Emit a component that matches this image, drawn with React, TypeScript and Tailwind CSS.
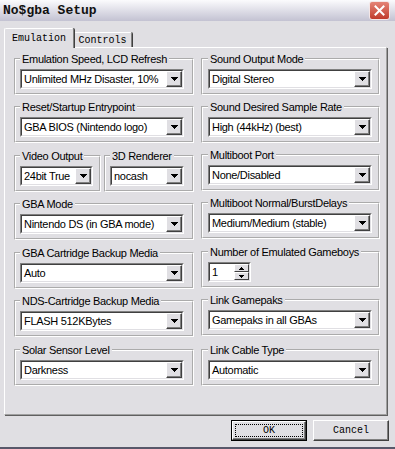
import React from "react";

const sans = "font-['Liberation_Sans',Arial,sans-serif] text-[11px] tracking-[-0.3px] text-black";
const mono = "font-['Liberation_Mono','Courier_New',monospace] tracking-normal";

function Arrow() {
  return (
    <svg width="7" height="4" viewBox="0 0 7 4" shapeRendering="crispEdges">
      <path d="M0 0h7v1h-1v1h-1v1h-1v1h-1v-1h-1v-1h-1v-1h-1z" fill="#000" />
    </svg>
  );
}

function DropBtn() {
  return (
    <div className="w-[16px] h-[16px] flex-none border border-t-white border-l-white border-r-[#404040] border-b-[#404040] bg-[#e0dfe3] shadow-[inset_-1px_-1px_0_#808080] flex items-center justify-center">
      <Arrow />
    </div>
  );
}

function Combo({ value, className = "" }: { value: string; className?: string }) {
  return (
    <div className={`h-[20px] flex border border-t-[#808080] border-l-[#808080] border-r-white border-b-white ${className}`}>
      <div className="flex-1 flex min-w-0 border border-t-[#404040] border-l-[#404040] border-r-[#e0dfe3] border-b-[#e0dfe3] bg-white">
        <span className="flex-1 min-w-0 pl-[2px] leading-[16px] whitespace-nowrap overflow-hidden">{value}</span>
        <DropBtn />
      </div>
    </div>
  );
}

function Spin() {
  return (
    <div className="w-[43px] h-[20px] flex border border-t-[#808080] border-l-[#808080] border-r-white border-b-white">
      <div className="flex-1 flex border border-t-[#404040] border-l-[#404040] border-r-[#e0dfe3] border-b-[#e0dfe3] bg-white">
        <span className="flex-1 pl-[2px] leading-[16px]">1</span>
        <div className="w-[15px] flex flex-col">
          <div className="h-[8px] border border-t-white border-l-white border-r-[#404040] border-b-[#404040] bg-[#e0dfe3] flex items-center justify-center">
            <svg width="5" height="3" viewBox="0 0 5 3" shapeRendering="crispEdges"><path d="M2 0h1v1h1v1h1v1h-5v-1h1v-1h1z" fill="#000" /></svg>
          </div>
          <div className="h-[8px] border border-t-white border-l-white border-r-[#404040] border-b-[#404040] bg-[#e0dfe3] flex items-center justify-center">
            <svg width="5" height="3" viewBox="0 0 5 3" shapeRendering="crispEdges"><path d="M0 0h5v1h-1v1h-1v1h-1v-1h-1v-1h-1z" fill="#000" /></svg>
          </div>
        </div>
      </div>
    </div>
  );
}

function Group({ label, children, className = "" }: { label: string; children: React.ReactNode; className?: string }) {
  return (
    <fieldset className={`h-[43px] border-2 [border-style:groove] border-white pt-[3px] pb-[4px] min-w-0 ${className}`}>
      <legend className="px-[2px] leading-[14px] whitespace-nowrap">{label}</legend>
      {children}
    </fieldset>
  );
}

export default function App() {
  return (
    <div className={`w-[395px] h-[449px] bg-[#e0dfe3] flex flex-col border-b-2 border-[#58586a] ${sans}`}>
      {/* title bar */}
      <div className="h-[21px] flex-none flex items-center justify-between bg-gradient-to-b from-[#fbfbfd] to-[#c3c2d2] pl-[3px] pr-[5px]">
        <span className={`${mono} text-[13px] font-bold text-[#111] leading-none`}>No$gba Setup</span>
        <div className="w-[21px] h-[19px] rounded-[3px] border border-[#f4e6e6] bg-gradient-to-b from-[#e48376] to-[#c03a2c] flex items-center justify-center">
          <svg width="11" height="11" viewBox="0 0 11 11">
            <path d="M1.5 1.5L9.5 9.5M9.5 1.5L1.5 9.5" stroke="#fff" strokeWidth="2" strokeLinecap="square" />
          </svg>
        </div>
      </div>

      {/* tabs */}
      <div className="flex items-end h-[26px] pl-[4px] flex-none">
        <div className={`relative z-10 -mb-px w-[70px] h-[20px] border-t border-l border-white border-r border-r-[#808080] rounded-t-[2px] bg-[#e0dfe3] shadow-[1px_0_0_#404040] flex items-start justify-center pt-[4px] ${mono} text-[10px] leading-[12px]`}>
          Emulation
        </div>
        <div className={`w-[58px] h-[15px] border-t border-white border-r border-r-[#808080] rounded-t-[2px] shadow-[1px_0_0_#404040] flex items-start justify-center pt-[2px] ${mono} text-[10px] leading-[12px]`}>
          Controls
        </div>
      </div>

      {/* panel */}
      <div className="ml-[4px] w-[383px] h-[368px] flex-none border-t border-l border-white border-r border-b border-r-[#a0a0a0] border-b-[#a0a0a0] shadow-[1px_1px_0_#606060] pl-[9px] pt-[4px] flex gap-[7px]">
        <div className="w-[180px] flex flex-col">
          <Group label="Emulation Speed, LCD Refresh" className="pl-[4px]">
            <Combo value="Unlimited MHz Disaster, 10%" className="w-[164px]" />
          </Group>
          <Group label="Reset/Startup Entrypoint" className="pl-[4px] mt-[5px]">
            <Combo value="GBA BIOS (Nintendo logo)" className="w-[164px]" />
          </Group>
          <div className="flex gap-[3px] mt-[6px]">
            <Group label="Video Output" className="pl-[4px] w-[87px]">
              <Combo value="24bit True" className="w-[73px]" />
            </Group>
            <Group label="3D Renderer" className="pl-[4px] w-[90px]">
              <Combo value="nocash" className="w-[74px]" />
            </Group>
          </div>
          <Group label="GBA Mode" className="pl-[4px] mt-[5px]">
            <Combo value="Nintendo DS (in GBA mode)" className="w-[164px]" />
          </Group>
          <Group label="GBA Cartridge Backup Media" className="pl-[4px] mt-[6px]">
            <Combo value="Auto" className="w-[164px]" />
          </Group>
          <Group label="NDS-Cartridge Backup Media" className="pl-[4px] mt-[5px]">
            <Combo value="FLASH 512KBytes" className="w-[164px]" />
          </Group>
          <Group label="Solar Sensor Level" className="pl-[4px] mt-[6px]">
            <Combo value="Darkness" className="w-[164px]" />
          </Group>
        </div>
        <div className="w-[179px] flex flex-col">
          <Group label="Sound Output Mode" className="pl-[5px]">
            <Combo value="Digital Stereo" className="w-[164px]" />
          </Group>
          <Group label="Sound Desired Sample Rate" className="pl-[5px] mt-[5px]">
            <Combo value="High (44kHz) (best)" className="w-[164px]" />
          </Group>
          <Group label="Multiboot Port" className="pl-[5px] mt-[5px]">
            <Combo value="None/Disabled" className="w-[164px]" />
          </Group>
          <Group label="Multiboot Normal/BurstDelays" className="pl-[5px] mt-[5px]">
            <Combo value="Medium/Medium (stable)" className="w-[164px]" />
          </Group>
          <Group label="Number of Emulated Gameboys" className="pl-[5px] mt-[6px]">
            <Spin />
          </Group>
          <Group label="Link Gamepaks" className="pl-[5px] mt-[5px]">
            <Combo value="Gamepaks in all GBAs" className="w-[164px]" />
          </Group>
          <Group label="Link Cable Type" className="pl-[5px] mt-[7px]">
            <Combo value="Automatic" className="w-[164px]" />
          </Group>
        </div>
      </div>

      {/* buttons */}
      <div className="flex pl-[231px] gap-[6px] mt-[5px] flex-none">
        <div className="w-[76px] h-[21px] border border-black bg-[#e0dfe3] flex">
          <div className="flex-1 border border-t-white border-l-white border-r-[#404040] border-b-[#404040] shadow-[inset_-1px_-1px_0_#808080] p-[2px] flex">
            <div className={`flex-1 outline outline-1 outline-dotted outline-black -outline-offset-1 flex items-center justify-center ${mono} text-[10px] leading-none`}>
              OK
            </div>
          </div>
        </div>
        <div className="w-[76px] h-[21px] border border-t-white border-l-white border-r-[#404040] border-b-[#404040] shadow-[inset_-1px_-1px_0_#808080] bg-[#e0dfe3] flex items-center justify-center">
          <span className={`${mono} text-[10px] leading-none`}>Cancel</span>
        </div>
      </div>
    </div>
  );
}
